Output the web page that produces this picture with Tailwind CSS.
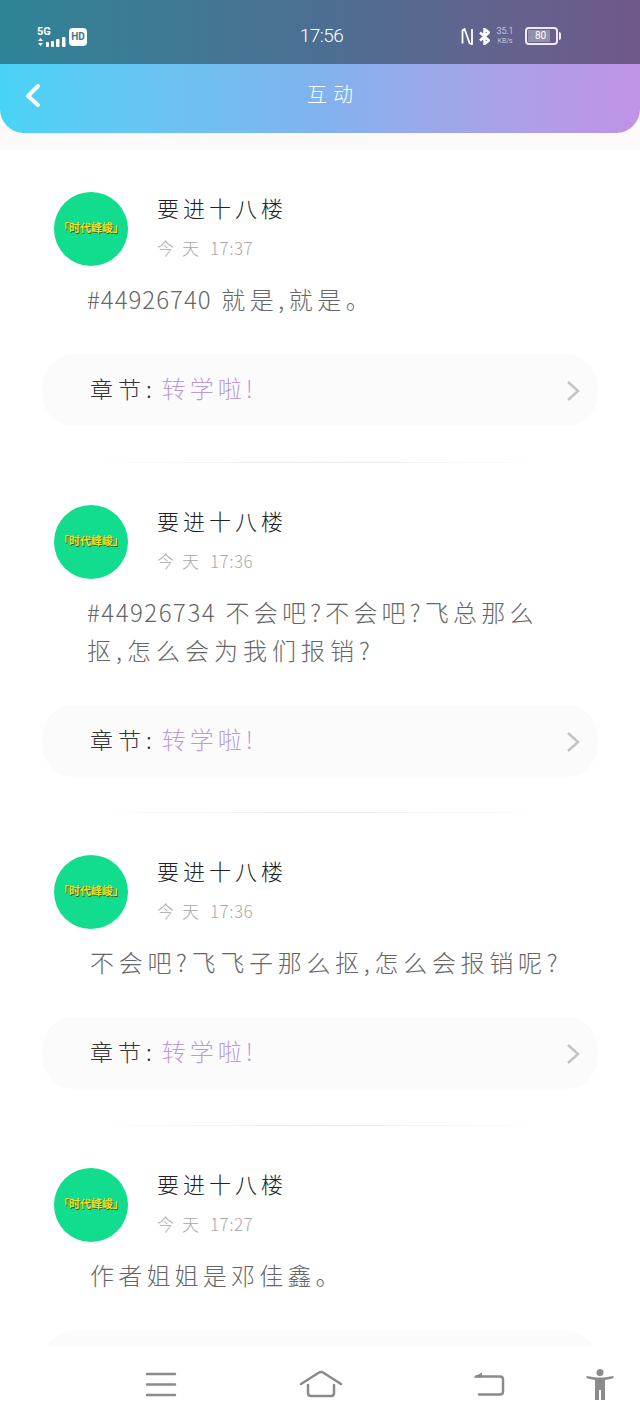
<!DOCTYPE html>
<html lang="zh-CN">
<head>
    <meta charset="UTF-8">
    <title>互动</title>
    <script src="https://cdn.jsdelivr.net/npm/@tailwindcss/browser@4"></script>
</head>
<body class="bg-white">
<div class="relative w-[640px] h-[1422px] overflow-hidden bg-white font-['Noto_Sans_CJK_SC',sans-serif]">

    <!-- 状态栏 -->
    <div class="h-[64px] pt-[8px] pl-[37px] pr-[78px] flex items-center justify-between bg-gradient-to-r from-[#2d8497] via-[#4b6f92] to-[#70588a] text-white">
        <div class="w-[146px] flex items-center gap-[3px]">
            <div class="flex flex-col w-[29px]">
                <span class="text-[11px] leading-[11px] font-bold font-['Roboto',sans-serif]">5G</span>
                <svg width="29" height="10" viewBox="0 0 29 10" fill="#fff">
                    <path d="M1 4 3.500 1 6 4zM1 6h5L3.500 9z"/>
                    <rect x="9" y="5" width="3" height="5" rx="1"/>
                    <rect x="14" y="4" width="3" height="6" rx="1"/>
                    <rect x="19" y="2" width="3.500" height="8" rx="1"/>
                    <rect x="25" y="0" width="3.500" height="10" rx="1"/>
                </svg>
            </div>
            <span class="w-[18px] h-[18px] mt-[1px] rounded-[4px] bg-white text-[#3d7890] text-[10px] leading-[18px] text-center font-bold font-['Roboto',sans-serif]">HD</span>
        </div>
        <span class="text-[19px] font-light font-['Roboto',sans-serif] tracking-[-0.5px]">17:56</span>
        <div class="w-[102px] flex items-center">
            <svg class="ml-[1px]" width="12" height="17" viewBox="0 0 12 17" fill="none" stroke="#fff" stroke-width="1.800">
                <path d="M1.500 15.500V2.500l2-1.500 5 14 2.500 1.500V1"/>
            </svg>
            <svg class="ml-[6px]" width="11" height="17" viewBox="0 0 11 17" fill="none" stroke="#fff" stroke-width="2.500">
                <path d="M1 4.500l9 8-4.500 3.500V1L10 4.500l-9 8"/>
            </svg>
            <div class="ml-[7px] w-[16px] flex flex-col items-center text-[#e8e4ee] font-['Roboto',sans-serif] font-light">
                <span class="text-[9px] leading-[11px]">35.1</span>
                <span class="text-[7px] leading-[9px]">KB/s</span>
            </div>
            <div class="ml-[12px] relative w-[33px] h-[18px] rounded-[4px] border-2 border-[#eee9f2] p-[1px]">
                <div class="w-[22px] h-full bg-white/30 text-[10px] leading-[12px] text-center pl-[3px] font-['Roboto',sans-serif]">80</div>
                <div class="absolute right-[-5px] top-[3px] w-[2px] h-[8px] rounded-r bg-[#eee9f2]"></div>
            </div>
        </div>
    </div>

    <!-- 标题栏 -->
    <div class="bg-[#fbf9f9] h-[86px]">
        <div class="h-[69px] relative flex items-center justify-center rounded-b-[24px] bg-gradient-to-r from-[#48d3f6] via-[#80b3ee] to-[#c192e5]">
            <svg class="absolute left-[25px] top-[19px]" width="16" height="25" viewBox="0 0 16 25" fill="none" stroke="#fff" stroke-width="4" stroke-linecap="round" stroke-linejoin="round">
                <path d="M13 3 3 13l10 9"/>
            </svg>
            <span class="text-white text-[20px] font-light tracking-[6px] pl-[26px] mb-[10px]">互动</span>
        </div>
    </div>

    <!-- 列表 -->
    <div class="bg-white">

        <div class="pt-[42px] pb-[36px]">
            <div class="ml-[54px] flex">
                <div class="w-[74px] h-[74px] rounded-full bg-[#12dc8e] flex items-center justify-center pb-[4px] text-[11px] font-bold text-[#f0e020] [text-shadow:1px_1px_0_#4a5a20] whitespace-nowrap">「时代峰峻」</div>
                <div class="ml-[29px]">
                    <div class="h-[30px] leading-[30px] text-[22px] font-light tracking-[4px] text-[#222222]">要进十八楼</div>
                    <div class="mt-[12px] h-[28px] leading-[28px] text-[17px] font-light text-[#a8a8a8]"><span class="tracking-[8px]">今天</span><span class="ml-[3px] tracking-[0.5px]">17:37</span></div>
                </div>
            </div>
            <div class="mt-[14px] ml-[87px] mr-[40px] text-[24px] leading-[38px] font-light tracking-[4.500px] text-[#666666]"><span class="tracking-[1px]">#44926740</span> 就是,就是。</div>
            <div class="mt-[36px] mx-[42px] h-[72px] pl-[48px] pr-[18px] flex items-center rounded-[32px] bg-[#fbfbfb] text-[24px] font-light">
                <span class="pb-[4px] text-[#333333] text-[23px] tracking-[5px]">章节:</span>
                <span class="pb-[4px] ml-[5px] text-[#b99bdb] tracking-[4px]">转学啦!</span>
                <svg class="ml-auto mt-[2px]" width="14" height="22" viewBox="0 0 14 22" fill="none" stroke="#c4c4c4" stroke-width="2.500"><path d="M2 2l10 9-10 9"/></svg>
            </div>
        </div>
        <div class="h-px bg-gradient-to-r from-white via-[#ebebeb] to-white mx-[80px]"></div>

        <div class="pt-[42px] pb-[35px]">
            <div class="ml-[54px] flex">
                <div class="w-[74px] h-[74px] rounded-full bg-[#12dc8e] flex items-center justify-center pb-[4px] text-[11px] font-bold text-[#f0e020] [text-shadow:1px_1px_0_#4a5a20] whitespace-nowrap">「时代峰峻」</div>
                <div class="ml-[29px]">
                    <div class="h-[30px] leading-[30px] text-[22px] font-light tracking-[4px] text-[#222222]">要进十八楼</div>
                    <div class="mt-[12px] h-[28px] leading-[28px] text-[17px] font-light text-[#a8a8a8]"><span class="tracking-[8px]">今天</span><span class="ml-[3px] tracking-[0.5px]">17:36</span></div>
                </div>
            </div>
            <div class="mt-[14px] ml-[87px] mr-[40px] text-[24px] leading-[38px] font-light tracking-[4.200px] text-[#666666]"><span class="tracking-[1.500px]">#44926734</span> 不会吧?不会吧?飞总那么<br><span class="tracking-[5px]">抠,怎么会为我们报销?</span></div>
            <div class="mt-[36px] mx-[42px] h-[72px] pl-[48px] pr-[18px] flex items-center rounded-[32px] bg-[#fbfbfb] text-[24px] font-light">
                <span class="pb-[4px] text-[#333333] text-[23px] tracking-[5px]">章节:</span>
                <span class="pb-[4px] ml-[5px] text-[#b99bdb] tracking-[4px]">转学啦!</span>
                <svg class="ml-auto mt-[2px]" width="14" height="22" viewBox="0 0 14 22" fill="none" stroke="#c4c4c4" stroke-width="2.500"><path d="M2 2l10 9-10 9"/></svg>
            </div>
        </div>
        <div class="h-px bg-gradient-to-r from-white via-[#ebebeb] to-white mx-[80px]"></div>

        <div class="pt-[42px] pb-[36px]">
            <div class="ml-[54px] flex">
                <div class="w-[74px] h-[74px] rounded-full bg-[#12dc8e] flex items-center justify-center pb-[4px] text-[11px] font-bold text-[#f0e020] [text-shadow:1px_1px_0_#4a5a20] whitespace-nowrap">「时代峰峻」</div>
                <div class="ml-[29px]">
                    <div class="h-[30px] leading-[30px] text-[22px] font-light tracking-[4px] text-[#222222]">要进十八楼</div>
                    <div class="mt-[12px] h-[28px] leading-[28px] text-[17px] font-light text-[#a8a8a8]"><span class="tracking-[8px]">今天</span><span class="ml-[3px] tracking-[0.5px]">17:36</span></div>
                </div>
            </div>
            <div class="mt-[14px] ml-[90px] mr-[40px] text-[24px] leading-[38px] font-light tracking-[4.700px] text-[#666666]">不会吧?飞飞子那么抠,怎么会报销呢?</div>
            <div class="mt-[36px] mx-[42px] h-[72px] pl-[48px] pr-[18px] flex items-center rounded-[32px] bg-[#fbfbfb] text-[24px] font-light">
                <span class="pb-[4px] text-[#333333] text-[23px] tracking-[5px]">章节:</span>
                <span class="pb-[4px] ml-[5px] text-[#b99bdb] tracking-[4px]">转学啦!</span>
                <svg class="ml-auto mt-[2px]" width="14" height="22" viewBox="0 0 14 22" fill="none" stroke="#c4c4c4" stroke-width="2.500"><path d="M2 2l10 9-10 9"/></svg>
            </div>
        </div>
        <div class="h-px bg-gradient-to-r from-white via-[#ebebeb] to-white mx-[80px]"></div>

        <div class="pt-[42px] pb-[36px]">
            <div class="ml-[54px] flex">
                <div class="w-[74px] h-[74px] rounded-full bg-[#12dc8e] flex items-center justify-center pb-[4px] text-[11px] font-bold text-[#f0e020] [text-shadow:1px_1px_0_#4a5a20] whitespace-nowrap">「时代峰峻」</div>
                <div class="ml-[29px]">
                    <div class="h-[30px] leading-[30px] text-[22px] font-light tracking-[4px] text-[#222222]">要进十八楼</div>
                    <div class="mt-[12px] h-[28px] leading-[28px] text-[17px] font-light text-[#a8a8a8]"><span class="tracking-[8px]">今天</span><span class="ml-[3px] tracking-[0.5px]">17:27</span></div>
                </div>
            </div>
            <div class="mt-[14px] ml-[90px] mr-[40px] text-[24px] leading-[38px] font-light tracking-[4.200px] text-[#666666]">作者姐姐是邓佳鑫。</div>
            <div class="mt-[37px] mx-[42px] h-[72px] rounded-[32px] bg-[#fbfbfb]"></div>
        </div>
    </div>

    <!-- 底部导航 -->
    <div class="absolute left-0 bottom-0 w-full h-[75px] bg-white">
        <svg class="absolute left-[145px] top-[25px]" width="32" height="26" viewBox="0 0 32 26" stroke="#8a8a8a" stroke-width="2.500" stroke-linecap="round">
            <path d="M2 2h28M2 12.500h28M2 23h28"/>
        </svg>
        <svg class="absolute left-[299px] top-[23px]" width="44" height="28" viewBox="0 0 44 28" fill="none" stroke="#8a8a8a" stroke-width="2.500" stroke-linecap="round" stroke-linejoin="round">
            <path d="M2 14 20 2.500q2-1 4 0L42 14"/>
            <path d="M9 15v8q0 3 3 3h20q3 0 3-3v-8"/>
        </svg>
        <svg class="absolute left-[472px] top-[24px]" width="34" height="28" viewBox="0 0 34 28" fill="none" stroke="#8a8a8a" stroke-width="2.500" stroke-linecap="round">
            <path d="M4 5.500h24q3 0 3 3v12q0 3-3 3H7"/>
            <path d="M1 6.500l9-5v5z" fill="#8a8a8a" stroke="none"/>
        </svg>
        <svg class="absolute left-[586px] top-[22px]" width="28" height="31" viewBox="0 0 28 31" fill="#8a8a8a">
            <circle cx="14" cy="3.500" r="3.500"/>
            <path d="M0.500 7q-.5 2 1 2.500L9 11v9h10v-9l7.500-1.500q1.500-.5 1-2.500L18 8.500h-8zM9 20h10v11h-4V21h-2v10H9z"/>
        </svg>
    </div>
</div>
</body>
</html>
